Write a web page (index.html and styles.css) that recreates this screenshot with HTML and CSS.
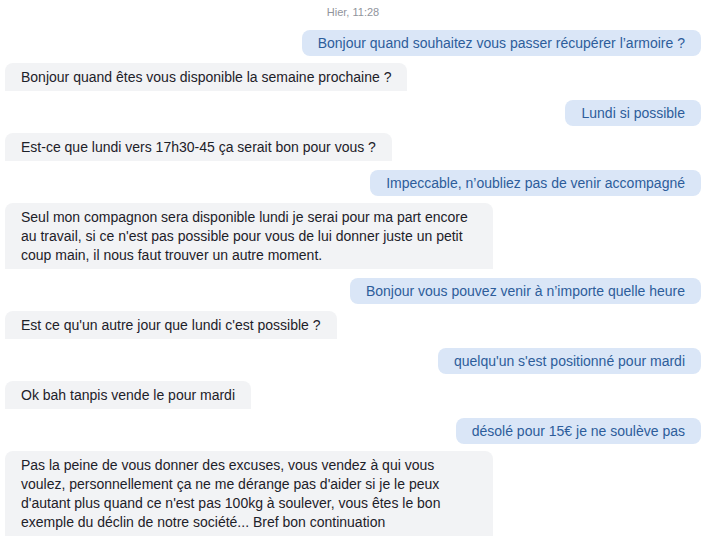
FILE: index.html
```html
<!DOCTYPE html>
<html lang="fr">
<head>
  <meta charset="UTF-8">
  <title>Conversation</title>
  <link rel="stylesheet" href="styles.css">
</head>
<body>

  <div class="chat">
    <div class="time">Hier, 11:28</div>

    <div class="row out"><div class="bubble">Bonjour quand souhaitez vous passer récupérer l’armoire ?</div></div>
    <div class="row in"><div class="bubble">Bonjour quand êtes vous disponible la semaine prochaine ?</div></div>

    <div class="row out"><div class="bubble">Lundi si possible</div></div>
    <div class="row in"><div class="bubble">Est-ce que lundi vers 17h30-45 ça serait bon pour vous ?</div></div>

    <div class="row out"><div class="bubble">Impeccable, n’oubliez pas de venir accompagné</div></div>
    <div class="row in"><div class="bubble wide">Seul mon compagnon sera disponible lundi je serai pour ma part encore au travail, si ce n'est pas possible pour vous de lui donner juste un petit coup main, il nous faut trouver un autre moment.</div></div>

    <div class="row out"><div class="bubble">Bonjour vous pouvez venir à n’importe quelle heure</div></div>
    <div class="row in"><div class="bubble">Est ce qu'un autre jour que lundi c'est possible ?</div></div>

    <div class="row out"><div class="bubble">quelqu'un s'est positionné pour mardi</div></div>
    <div class="row in"><div class="bubble">Ok bah tanpis vende le pour mardi</div></div>

    <div class="row out"><div class="bubble">désolé pour 15€ je ne soulève pas</div></div>
    <div class="row in"><div class="bubble wide">Pas la peine de vous donner des excuses, vous vendez à qui vous voulez, personnellement ça ne me dérange pas d'aider si je le peux d'autant plus quand ce n'est pas 100kg à soulever, vous êtes le bon exemple du déclin de notre société... Bref bon continuation</div></div>
  </div>

</body>
</html>
```

FILE: styles.css
```css
body {
  font-family: "Liberation Sans", Arial, sans-serif;
  background: #fff;
  margin: 0;
  padding: 0;
}

.chat {
  padding: 5px 9px 0 5px;
  display: flex;
  flex-direction: column;
}

.time {
  text-align: center;
  font-size: 11px;
  color: #90949c;
  line-height: 14px;
  margin-bottom: 11px;
}

.row {
  display: flex;
}

.row.out {
  justify-content: flex-end;
  margin-bottom: 7px;
}

.row.in {
  justify-content: flex-start;
  margin-bottom: 9px;
}

.bubble {
  font-size: 14px;
  line-height: 19px;
  padding: 4px 16px 3px;
}

.out .bubble {
  background: #dae6f7;
  color: #2d5d9b;
  border-radius: 8px;
}

.in .bubble {
  background: #f2f3f5;
  color: #1d2129;
  border-radius: 8px 8px 0 0;
  padding: 5px 16px 4px;
}

.in .bubble.wide {
  max-width: 456px;
}
```
